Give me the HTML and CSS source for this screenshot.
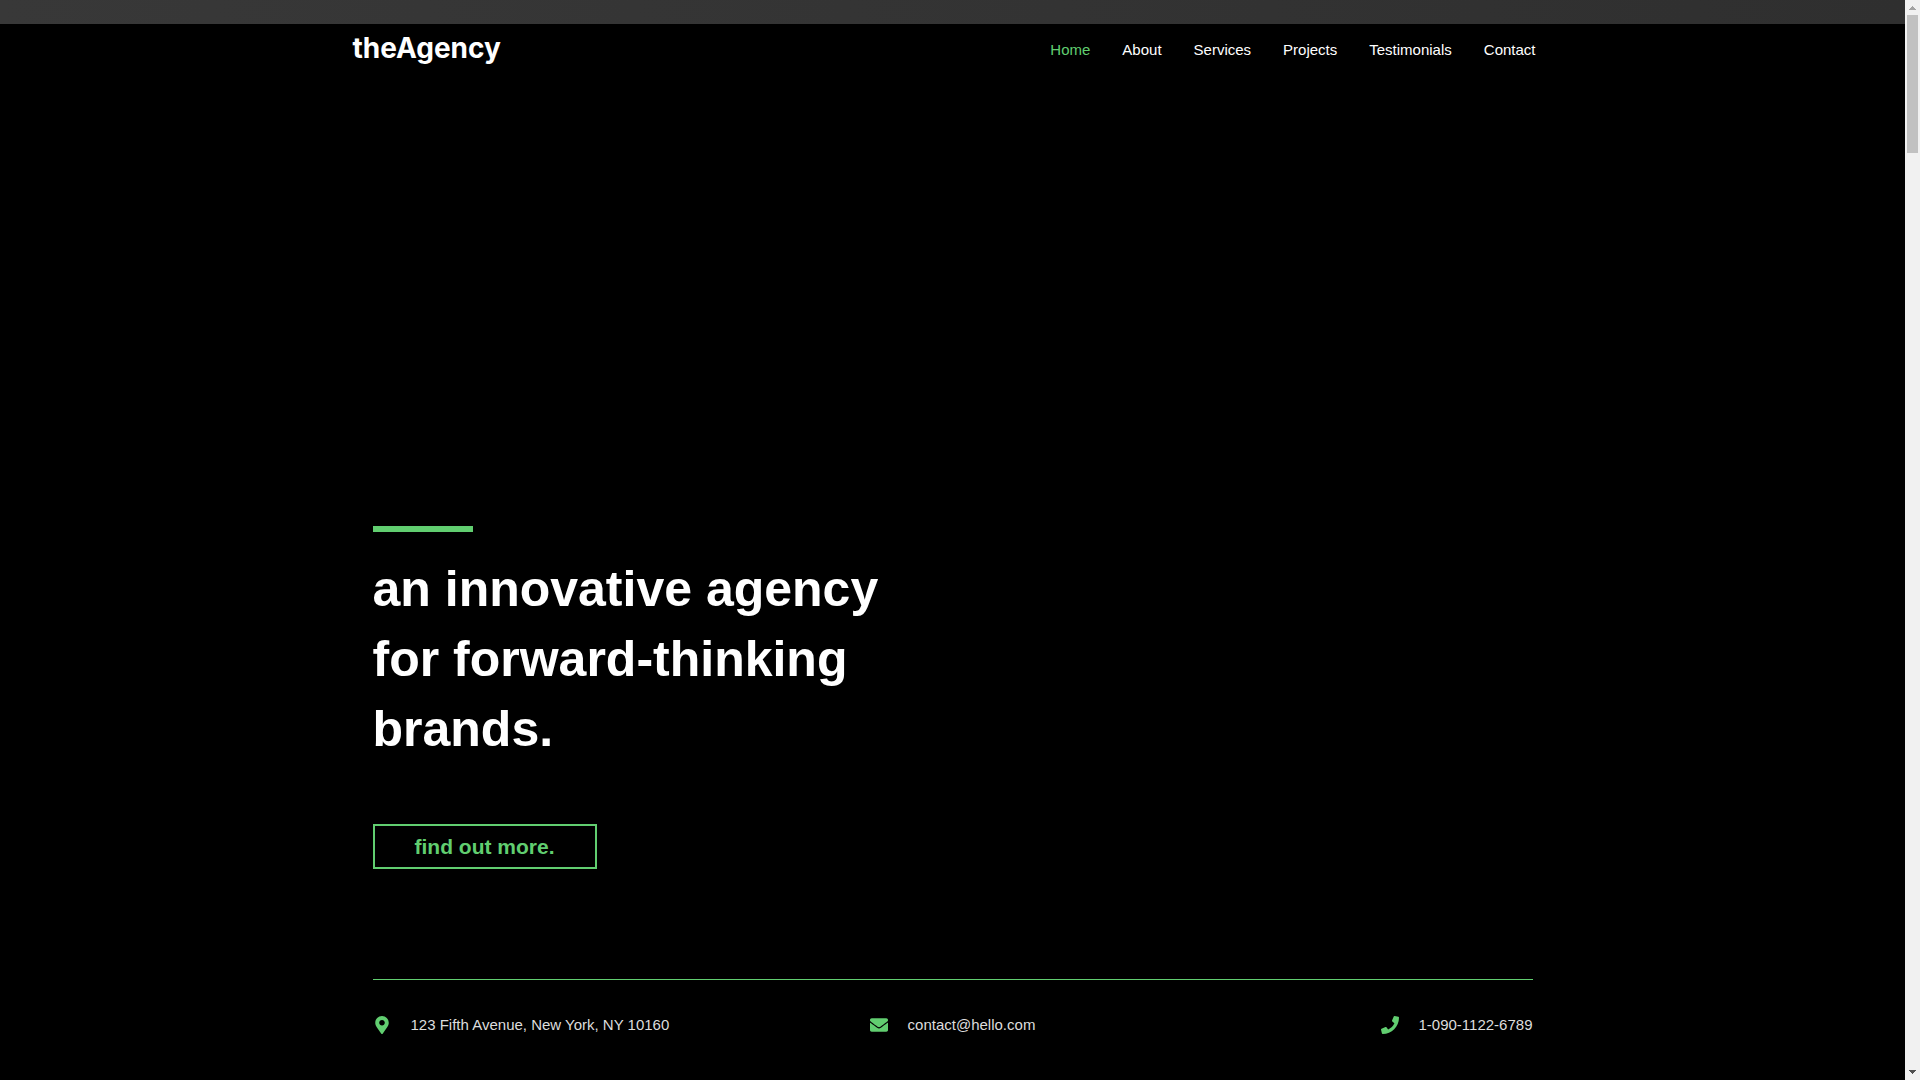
FILE: index.html
```
<!DOCTYPE html>
<html lang="en">
<head>
  <meta charset="UTF-8" />
  <meta name="viewport" content="width=device-width, initial-scale=1.0"/>
  <title>theAgency</title>
  <link rel="stylesheet" href="styles.css">
</head>
<body>

  <div class="page">
    <div class="top-bar"></div>

    <!-- Header -->
    <header class="container header">
      <a class="logo" href="#home">theAgency</a>
      <nav class="menu">
        <a class="active" href="#home">Home</a>
        <a href="#about">About</a>
        <a href="#services">Services</a>
        <a href="#projects">Projects</a>
        <a href="#testimonials">Testimonials</a>
        <a href="#contact">Contact</a>
      </nav>
    </header>

    <!-- Hero Section -->
    <main class="container hero" id="home">
      <div class="accent"></div>
      <h1>an innovative agency for forward-thinking brands.</h1>
      <a class="hero-button" href="#about">find out more.</a>

      <ul class="contact-list" id="contact">
        <li>
          <svg class="icon" viewBox="-64 0 512 512" aria-hidden="true"><path d="M172.268 501.67C26.97 291.031 0 269.413 0 192 0 85.961 85.961 0 192 0s192 85.961 192 192c0 77.413-26.97 99.031-172.268 309.67-9.535 13.774-29.93 13.773-39.464 0zM192 272c44.183 0 80-35.817 80-80s-35.817-80-80-80-80 35.817-80 80 35.817 80 80 80z"/></svg>
          <span>123 Fifth Avenue, New York, NY 10160</span>
        </li>
        <li>
          <svg class="icon" viewBox="0 0 512 512" aria-hidden="true"><path d="M502.3 190.8c3.9-3.1 9.7-.2 9.7 4.7V400c0 26.5-21.5 48-48 48H48c-26.5 0-48-21.5-48-48V195.6c0-5 5.7-7.8 9.7-4.7 22.4 17.4 52.1 39.5 154.1 113.6 21.1 15.4 56.7 47.8 92.2 47.6 35.7.3 72-32.8 92.3-47.6 102-74.1 131.6-96.3 154-113.7zM256 320c23.2.4 56.6-29.2 73.4-41.4 132.7-96.3 142.8-104.7 173.4-128.7 5.8-4.5 9.2-11.5 9.2-18.9v-19c0-26.5-21.5-48-48-48H48c-26.5 0-48 21.5-48 48v19c0 7.4 3.4 14.3 9.2 18.9 30.6 23.9 40.7 32.4 173.4 128.7 16.8 12.2 50.2 41.8 73.4 41.4z"/></svg>
          <span>contact@hello.com</span>
        </li>
        <li>
          <svg class="icon" viewBox="0 0 512 512" aria-hidden="true"><path d="M493.4 24.6l-104-24c-11.3-2.6-22.9 3.3-27.5 13.9l-48 112c-4.2 9.8-1.4 21.3 6.9 28l60.6 49.6c-36 76.7-98.9 140.5-177.2 177.2l-49.6-60.6c-6.8-8.3-18.2-11.1-28-6.9l-112 48C3.9 366.5-2 378.1.6 389.4l24 104C27.1 504.2 36.7 512 48 512c256.1 0 464-207.5 464-464 0-11.2-7.7-20.9-18.6-23.4z"/></svg>
          <span>1-090-1122-6789</span>
        </li>
      </ul>
    </main>
  </div>

  <!-- Scrollbar -->
  <div class="scrollbar" aria-hidden="true">
    <svg class="arrow" viewBox="0 0 15 15"><path fill="#a3a3a3" d="M7 6h1v1h1v1h1v1h1v1H4V9h1V8h1V7h1z"/></svg>
    <div class="thumb"></div>
    <svg class="arrow arrow-down" viewBox="0 0 15 15"><path fill="#505050" d="M4 5h7v1h-1v1H9v1H8v1H7V8H6V7H5V6H4z"/></svg>
  </div>

</body>
</html>
```

FILE: styles.css
```
* {
  box-sizing: border-box;
}
body {
  display: flex;
  min-height: 100vh;
  margin: 0;
  background: #000;
  color: #fff;
  font-family: "Liberation Sans", Arial, sans-serif;
  font-size: 15px;
}
a {
  color: inherit;
  text-decoration: none;
}
.page {
  flex: 1;
  display: flex;
  flex-direction: column;
}
.top-bar {
  height: 24px;
  background: linear-gradient(to right, #383838, #2f2f2f);
}
.container {
  width: 100%;
  max-width: 1200px;
  margin: 0 auto;
}

/* Header */
.header {
  display: flex;
  align-items: center;
  justify-content: space-between;
  min-height: 50px;
}
.logo {
  padding-bottom: 2px;
  font-family: Inter, sans-serif;
  font-size: 28px;
  font-weight: 700;
  line-height: 32px;
}
.menu {
  display: flex;
  flex-wrap: wrap;
  gap: 32px;
  padding-right: 17px;
}
.menu .active {
  color: #61ce70;
}

/* Hero */
.hero {
  flex: 1;
  display: flex;
  flex-direction: column;
  justify-content: flex-end;
  align-items: flex-start;
  padding: 0 20px;
}
.accent {
  width: 100px;
  height: 6px;
  background: #61ce70;
}
h1 {
  max-width: 580px;
  margin: 22px 0 60px;
  font-size: 50px;
  font-weight: 700;
  line-height: 70px;
}
.hero-button {
  padding: 10px 40px;
  border: 2px solid #61ce70;
  color: #61ce70;
  font-size: 21px;
  font-weight: 700;
  line-height: 21px;
}
.contact-list {
  display: grid;
  grid-template-columns: 1fr 1fr 1fr;
  width: 100%;
  margin: 110px 0 0;
  padding: 36px 0 46px;
  border-top: 1px solid #61ce70;
  color: #ddd;
  line-height: 18px;
  list-style: none;
}
.contact-list li {
  display: flex;
  align-items: center;
  gap: 20px;
}
.contact-list li:nth-child(2) {
  justify-content: center;
}
.contact-list li:nth-child(3) {
  justify-content: flex-end;
}
.icon {
  width: 18px;
  height: 18px;
  fill: #61ce70;
}

/* Scrollbar */
.scrollbar {
  display: flex;
  flex-direction: column;
  width: 15px;
  background: #f1f1f1;
}
.arrow {
  width: 15px;
  height: 15px;
}
.arrow-down {
  margin-top: auto;
}
.thumb {
  height: 138px;
  margin: 0 2px;
  background: #c1c1c1;
}
```
